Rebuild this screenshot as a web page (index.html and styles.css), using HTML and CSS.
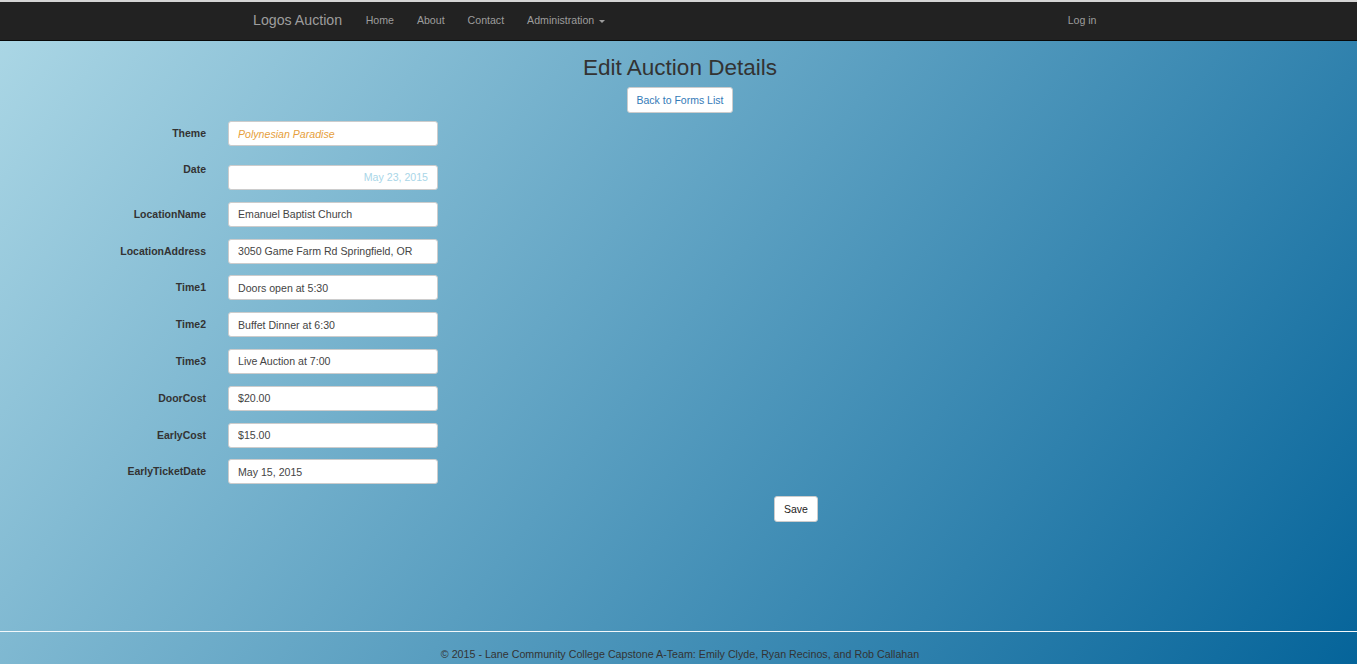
FILE: index.html
```html
<!DOCTYPE html>
<html lang="en">
<head>
<meta charset="utf-8">
<title>Edit Auction Details - Logos Auction</title>
<link rel="stylesheet" href="styles.css">
</head>
<body>
<nav class="navbar">
  <div class="nav-inner">
    <div class="nav-left">
      <a class="brand" href="#">Logos Auction</a>
      <ul class="nav-links">
        <li><a href="#">Home</a></li>
        <li><a href="#">About</a></li>
        <li><a href="#">Contact</a></li>
        <li><a href="#">Administration <span class="caret"></span></a></li>
      </ul>
    </div>
    <ul class="nav-links">
      <li><a href="#">Log in</a></li>
    </ul>
  </div>
</nav>

<main class="content">
  <h2 class="title">Edit Auction Details</h2>
  <div class="back-row"><a class="btn btn-back" href="#">Back to Forms List</a></div>

  <form class="form">
    <div class="row"><label class="lbl">Theme</label><input class="inp inp-theme" type="text" value="Polynesian Paradise"></div>
    <div class="row row-date"><label class="lbl">Date</label><input class="inp inp-date" type="text" value="May 23, 2015"></div>
    <div class="row"><label class="lbl">LocationName</label><input class="inp" type="text" value="Emanuel Baptist Church"></div>
    <div class="row"><label class="lbl">LocationAddress</label><input class="inp" type="text" value="3050 Game Farm Rd Springfield, OR"></div>
    <div class="row"><label class="lbl">Time1</label><input class="inp" type="text" value="Doors open at 5:30"></div>
    <div class="row"><label class="lbl">Time2</label><input class="inp" type="text" value="Buffet Dinner at 6:30"></div>
    <div class="row"><label class="lbl">Time3</label><input class="inp" type="text" value="Live Auction at 7:00"></div>
    <div class="row"><label class="lbl">DoorCost</label><input class="inp" type="text" value="$20.00"></div>
    <div class="row"><label class="lbl">EarlyCost</label><input class="inp" type="text" value="$15.00"></div>
    <div class="row"><label class="lbl">EarlyTicketDate</label><input class="inp" type="text" value="May 15, 2015"></div>
    <div class="save-row"><button class="btn btn-save" type="button">Save</button></div>
  </form>
</main>

<footer class="footer">
  <hr class="rule">
  <p class="copy">&copy; 2015 - Lane Community College Capstone A-Team: Emily Clyde, Ryan Recinos, and Rob Callahan</p>
</footer>
</body>
</html>
```

FILE: styles.css
```css
* { box-sizing: border-box; }

html, body {
  margin: 0;
  padding: 0;
}

body {
  min-height: 100vh;
  font-family: "Liberation Sans", Arial, Helvetica, sans-serif;
  font-size: 10.5px;
  color: #333;
  background: linear-gradient(128deg, #add8e6 0%, #05649a 100%);
  overflow: hidden;
}

/* ---------- navbar ---------- */
.navbar {
  background: #222;
  border-top: 2px solid #d4d4d4;
  border-bottom: 1px solid #080808;
  height: 41px;
}

.nav-inner {
  display: flex;
  justify-content: space-between;
  align-items: flex-start;
  height: 38px;
  padding: 0 249px 0 241px;
}

.nav-left {
  display: flex;
  align-items: flex-start;
}

.brand {
  color: #9d9d9d;
  font-size: 14.2px;
  text-decoration: none;
  padding: 0 12px;
  line-height: 37px;
}

.nav-links {
  display: flex;
  list-style: none;
  margin: 0;
  padding: 0;
}

.nav-links a {
  display: block;
  color: #9d9d9d;
  text-decoration: none;
  padding: 0 11.5px;
  line-height: 37px;
  font-size: 10.6px;
}

.caret {
  display: inline-block;
  width: 0;
  height: 0;
  margin-left: 2px;
  vertical-align: middle;
  border-top: 3px solid #9d9d9d;
  border-left: 3px solid transparent;
  border-right: 3px solid transparent;
}

/* ---------- content ---------- */
.content {
  display: flex;
  flex-direction: column;
}

.title {
  margin: 14.5px 0 0;
  font-size: 22.5px;
  font-weight: 400;
  line-height: 24.75px;
  text-align: center;
  color: #333;
  padding-left: 3px;
}

.back-row {
  display: flex;
  justify-content: center;
  margin-top: 6.75px;
  padding-left: 3px;
}

.btn {
  display: inline-flex;
  align-items: center;
  justify-content: center;
  height: 26px;
  padding: 0 9px;
  background: #fff;
  border: 1px solid #ccc;
  border-radius: 3px;
  font-family: "Liberation Sans", Arial, Helvetica, sans-serif;
  font-size: 10.5px;
  text-decoration: none;
  white-space: nowrap;
  color: #333;
}

.btn-back {
  min-width: 106px;
  color: #337ab7;
}

.form {
  margin-top: 8px;
  display: flex;
  flex-direction: column;
}

.row {
  display: flex;
  align-items: flex-start;
  margin-bottom: 11.8px;
}

.lbl {
  width: 206px;
  text-align: right;
  font-weight: bold;
  line-height: 25px;
  margin-right: 22px;
  color: #333;
}

.inp {
  width: 210px;
  height: 25px;
  padding: 0 9px;
  border: 1px solid #ccc;
  border-radius: 3px;
  background: #fff;
  font-family: "Liberation Sans", Arial, Helvetica, sans-serif;
  font-size: 10.6px;
  color: #444;
}

.inp-theme {
  color: #e6a03c;
  font-style: italic;
}

.row-date .lbl {
  line-height: 23px;
}

.row-date .inp-date {
  margin-top: 7.2px;
  text-align: right;
  color: #a9d6e8;
}

.save-row {
  display: flex;
  padding-left: 774px;
}

.btn-save {
  width: 44px;
  color: #222;
}

/* ---------- footer ---------- */
.footer {
  margin-top: 109px;
}

.rule {
  margin: 0;
  border: 0;
  border-top: 1px solid #f2f8fb;
  height: 0;
}

.copy {
  margin: 14px 0 0;
  text-align: center;
  line-height: 16px;
  font-size: 10.7px;
  color: #333;
  padding-left: 3px;
}
```
